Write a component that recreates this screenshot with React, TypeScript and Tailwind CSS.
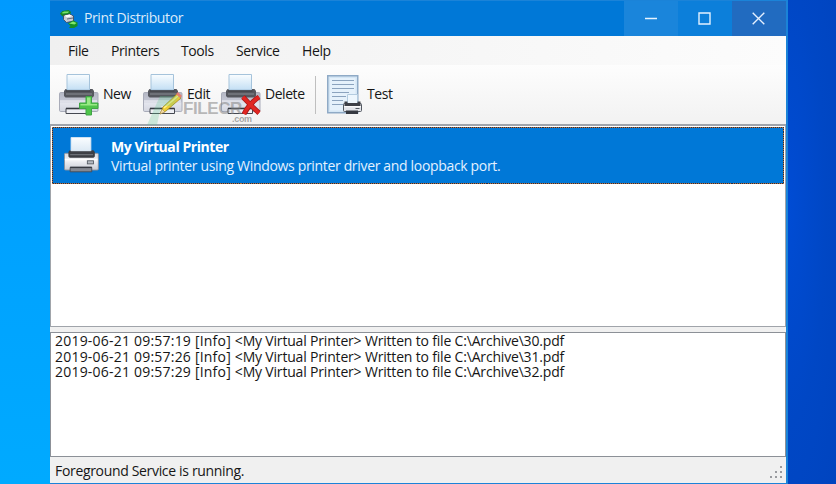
import type { ReactNode } from "react";

type PrinterProps = { className?: string; id: string; selected?: boolean; children?: ReactNode };

function Printer({ className, id, selected, children }: PrinterProps) {
  return (
    <svg className={className} viewBox="0 0 42 42" fill="none">
      <defs>
        <linearGradient id={`${id}-paper`} x1="0" y1="0" x2="0" y2="1">
          <stop offset="0" stopColor="#fafdff" />
          <stop offset="1" stopColor={selected ? "#dce9f4" : "#c3dff4"} />
        </linearGradient>
        <linearGradient id={`${id}-body`} x1="0" y1="0" x2="0" y2="1">
          <stop offset="0" stopColor={selected ? "#d9dbe1" : "#b4b7c4"} />
          <stop offset="0.45" stopColor={selected ? "#f1f1f4" : "#c4c7d4"} />
          <stop offset="0.55" stopColor={selected ? "#e8e9ee" : "#e4e6ee"} />
          <stop offset="1" stopColor={selected ? "#c9ccd4" : "#d4d6e0"} />
        </linearGradient>
      </defs>
      <rect x="0.5" y="18.5" width="38.5" height="19" rx="1.2" fill={`url(#${id}-body)`} stroke={selected ? "#8b8f9a" : "#a9acb9"} />
      {selected ? (
        <>
          <path d="M1 25.5h37" stroke="#fff" strokeWidth="1.5" />
          <rect x="26.5" y="27" width="7" height="3.500" fill="#b5bac2" stroke="#545a63" />
        </>
      ) : (
        <path d="M1 27h37" stroke="#f1f2f7" />
      )}
      <path d="M6.500 15h27l1.500 2v5l-1.500 1.500h-27L5 22v-5z" fill={selected ? "#3c3e43" : "#55575e"} />
      <path d="M7 20h26" stroke={selected ? "#6d7076" : "#777a82"} strokeWidth="1.500" />
      <path d="M8 .5h22.500v15.500H8z" fill={`url(#${id}-paper)`} stroke={selected ? "#d9e6f2" : "#a5c3db"} />
      <path d="M7 17h24.500" stroke="#43454b" strokeWidth="1.5" />
      <path d="M7 34.500h24.500v5H7z" fill={selected ? "#858891" : "#eeeff4"} stroke="#454851" />
      <path d="M7 34.500h24.500" stroke="#363941" strokeWidth="1.6" />
      {children}
    </svg>
  );
}

function TestIcon() {
  return (
    <svg className="h-[40px] w-[36px] shrink-0" viewBox="0 0 36 40" fill="none">
      <path d="M.75.75h30v37h-30z" fill="#d4e6f5" stroke="#8faac6" strokeWidth="1.5" />
      <path d="M3 3h25.500v32.500H3z" fill="#e5f1fb" />
      <path d="M5 5.500h22M5 9.500h22M5 13.500h22M5 17.500h17M5 21.500h14M5 25.500h11M5 29.500h11" stroke="#8ba3be" />
      <path d="M20.500 19.500h10v10h-10z" fill="#edf6fd" stroke="#b4cce0" />
      <rect x="16.500" y="28.500" width="18" height="8" rx="1" fill="#e2e4e9" stroke="#525861" />
      <path d="M17.500 26.500h3v1.500h10v-1.500h3V31h-16z" fill="#3d4047" />
      <path d="M17 31.700h17" stroke="#fff" />
      <path d="M28.500 33.500h4" stroke="#555c65" />
      <path d="M19 35.500h12V39H19z" fill="#353941" />
    </svg>
  );
}

function AppIcon() {
  return (
    <svg className="ml-[10px] h-[18px] w-[18px] shrink-0" viewBox="0 0 18 18">
      <path d="M0 3.500 2.500 1l6-1L11 2l-1 3H6L4.500 8 1 5z" fill="#168a25" />
      <path d="M1.500 3 4 1.500 9 1.500l-1 1.500-5 .5z" fill="#78e36c" />
      <path d="m3.500 5.500 6-1.500 4 2v5l-7 1.500-3-3z" fill="#c9ccd4" stroke="#394357" strokeWidth=".8" />
      <path d="m4.500 5.500 5-1L12.500 6 7 7.500z" fill="#fff" />
      <path d="m7 9 6-1" stroke="#606979" />
      <path d="m8 13.500 5-3 4.500 2v3.500L14 18H9l1.500-2z" fill="#159024" />
      <path d="m9 13.500 4-2 3.500 1.500-2 1.500z" fill="#80e76d" />
    </svg>
  );
}

const log = [
  { time: "2019-06-21 09:57:19", file: "30.pdf" },
  { time: "2019-06-21 09:57:26", file: "31.pdf" },
  { time: "2019-06-21 09:57:29", file: "32.pdf" },
];

export default function App() {
  return (
    <div className="flex h-[484px] w-[836px] overflow-hidden bg-[#0048c8] font-['Open_Sans','Noto_Sans',sans-serif] text-[14px] text-[#161616]">
      <div className="w-[50px] shrink-0 bg-linear-to-b from-[#009aff] to-[#00aaff]" />
      <main className="flex w-[738px] shrink-0 flex-col border-t border-r-2 border-b border-[#1b83d8] bg-[#f0f0f0]">
        <header className="flex h-[35px] shrink-0 items-center bg-[#0078d7] text-[#dcebfa]">
          <AppIcon />
          <h1 className="ml-[6px] w-[540px] pb-px text-[14px] leading-[34px] tracking-[-0.4px]">Print Distributor</h1>
          <div className="flex h-full flex-1">
            <button className="flex w-[54px] items-center justify-center bg-[#1a85db]" aria-label="Minimize">
              <svg className="h-[12px] w-[12px]" viewBox="0 0 12 12"><path d="M0 5.500h12" stroke="#e8f4ff" strokeWidth="1.5" /></svg>
            </button>
            <button className="flex w-[54px] items-center justify-center bg-[#0c7fda] pr-px" aria-label="Maximize">
              <svg className="h-[13px] w-[13px]" viewBox="0 0 13 13" fill="none"><path d="M1 1h11v11H1z" stroke="#e2f1ff" strokeWidth="1.4" /></svg>
            </button>
            <button className="flex flex-1 items-center justify-center bg-[#216bc0] pr-px" aria-label="Close">
              <svg className="h-[13px] w-[13px]" viewBox="0 0 13 13"><path d="m.7.700 11.600 11.600M12.300.700.700 12.300" stroke="#e4f0ff" strokeWidth="1.4" /></svg>
            </button>
          </div>
        </header>

        <nav className="flex h-[29px] shrink-0 items-center bg-linear-to-r from-[#f0f0f0] to-[#fcfcfc] pb-px pl-[18px] tracking-[-0.4px]">
          <span className="w-[43px]">File</span>
          <span className="w-[70px]">Printers</span>
          <span className="w-[55px]">Tools</span>
          <span className="w-[66px]">Service</span>
          <span>Help</span>
        </nav>

        <section className="relative flex h-[59px] shrink-0 items-start bg-linear-to-b from-[#fdfdfd] to-[#f2f2f2] pt-[9px] pl-[9px] leading-[39px] tracking-[-0.45px]">
          <Printer id="new" className="h-[42px] w-[42px] shrink-0">
            <path d="M27 22.500h5.500V29H39v5.500h-6.500V41H27v-6.500h-6.500V29H27z" fill="#4fc44a" stroke="#3fa545" />
            <path d="M28 23.500h3.500V30H38v1.500H21.500V30H28z" fill="#98ea84" />
          </Printer>
          <span className="ml-[2px] w-[40px]">New</span>
          <Printer id="edit" className="h-[42px] w-[42px] shrink-0">
            <path d="m17 40 3-7 14-13 4 4-15 13z" fill="#edcd36" stroke="#a58b21" strokeWidth=".8" />
            <path d="m21 34 14-12" stroke="#fff28b" strokeWidth="1.5" />
            <path d="m17 40 2-5 3 3z" fill="#f6dca9" stroke="#9b8146" strokeWidth=".5" />
            <path d="m33 20 2-2 4 4-2 2z" fill="#e27e74" />
          </Printer>
          <span className="ml-[2px] w-[34px]">Edit</span>
          <Printer id="delete" className="h-[42px] w-[42px] shrink-0">
            <path d="M22 23c3 3 8 9 16 16M38 23c-6 4-11 9-15 17" stroke="#a81818" strokeWidth="5" />
            <path d="M22 23c3 3 8 9 16 16M38 23c-6 4-11 9-15 17" stroke="#e02622" strokeWidth="3.500" />
          </Printer>
          <span className="ml-[2px] w-[50px]">Delete</span>
          <div className="mt-[2px] mr-[11px] h-[38px] w-px bg-[#bfbfbf]" />
          <div className="mt-px"><TestIcon /></div>
          <span className="ml-[4px]">Test</span>
          <div className="pointer-events-none absolute top-[31px] left-[95px] h-[29px] w-[112px]">
            <svg className="absolute top-0 left-0 h-[29px] w-[38px]" viewBox="0 0 38 29">
              <path d="m15 0 20-1-7 11H16L12 29H2z" fill="#65c994" opacity=".27" />
            </svg>
            <b className="absolute top-[4px] left-[38px] font-['Liberation_Sans',sans-serif] text-[17px] leading-[18px] font-bold tracking-[-0.4px] text-[#828282]/55">FILECR</b>
            <b className="absolute top-[18px] left-[87px] font-['Liberation_Sans',sans-serif] text-[9px] leading-[11px] tracking-[-0.3px] text-[#888888]/75">.com</b>
          </div>
        </section>

        <section className="h-[203px] shrink-0 border border-t-2 border-[#a0a4aa] bg-white px-px pt-px">
          <div className="h-[57px] w-[732px] bg-[repeating-linear-gradient(135deg,#b8713a_0px,#b8713a_0.71px,#1c3050_0.71px,#1c3050_1.42px)] p-px">
            <div className="flex h-full bg-[#0078d7] text-[#e3f1ff]">
              <Printer id="selected" selected className="mt-[9px] ml-[11px] h-[37px] w-[37px] shrink-0" />
              <div className="ml-[10px] pt-[9px] leading-[19px]">
                <p className="font-bold tracking-[-0.43px] text-white">My Virtual Printer</p>
                <p className="tracking-[-0.33px]">Virtual printer using Windows printer driver and loopback port.</p>
              </div>
            </div>
          </div>
        </section>

        <section className="mt-[5px] h-[125px] shrink-0 border border-[#8c9097] bg-white pl-[4px] leading-[15.5px]">
          {log.map(({ time, file }) => (
            <p key={file} className="whitespace-pre">
              <span className="tracking-[0.21px]">{`${time} [Info] `}</span>
              <span className="tracking-[-0.18px]">{`<My Virtual Printer> Written to file C:\\Archive\\${file}`}</span>
            </p>
          ))}
        </section>

        <footer className="flex min-h-0 flex-1 items-center justify-between pl-[5px] tracking-[-0.33px]">
          <span>Foreground Service is running.</span>
          <svg className="mt-[5px] mr-[3px] h-[13px] w-[13px]" viewBox="0 0 13 13" fill="#999b9f">
            <path d="M10 0h2v2h-2zM5 5h2v2H5zM10 5h2v2h-2zM0 10h2v2H0zM5 10h2v2H5zM10 10h2v2h-2z" />
          </svg>
        </footer>
      </main>
      <div className="flex-1 bg-[radial-gradient(ellipse_at_0%_43%,#004cd4_0%,#0047c5_55%,#0044bf_100%)]" />
    </div>
  );
}
